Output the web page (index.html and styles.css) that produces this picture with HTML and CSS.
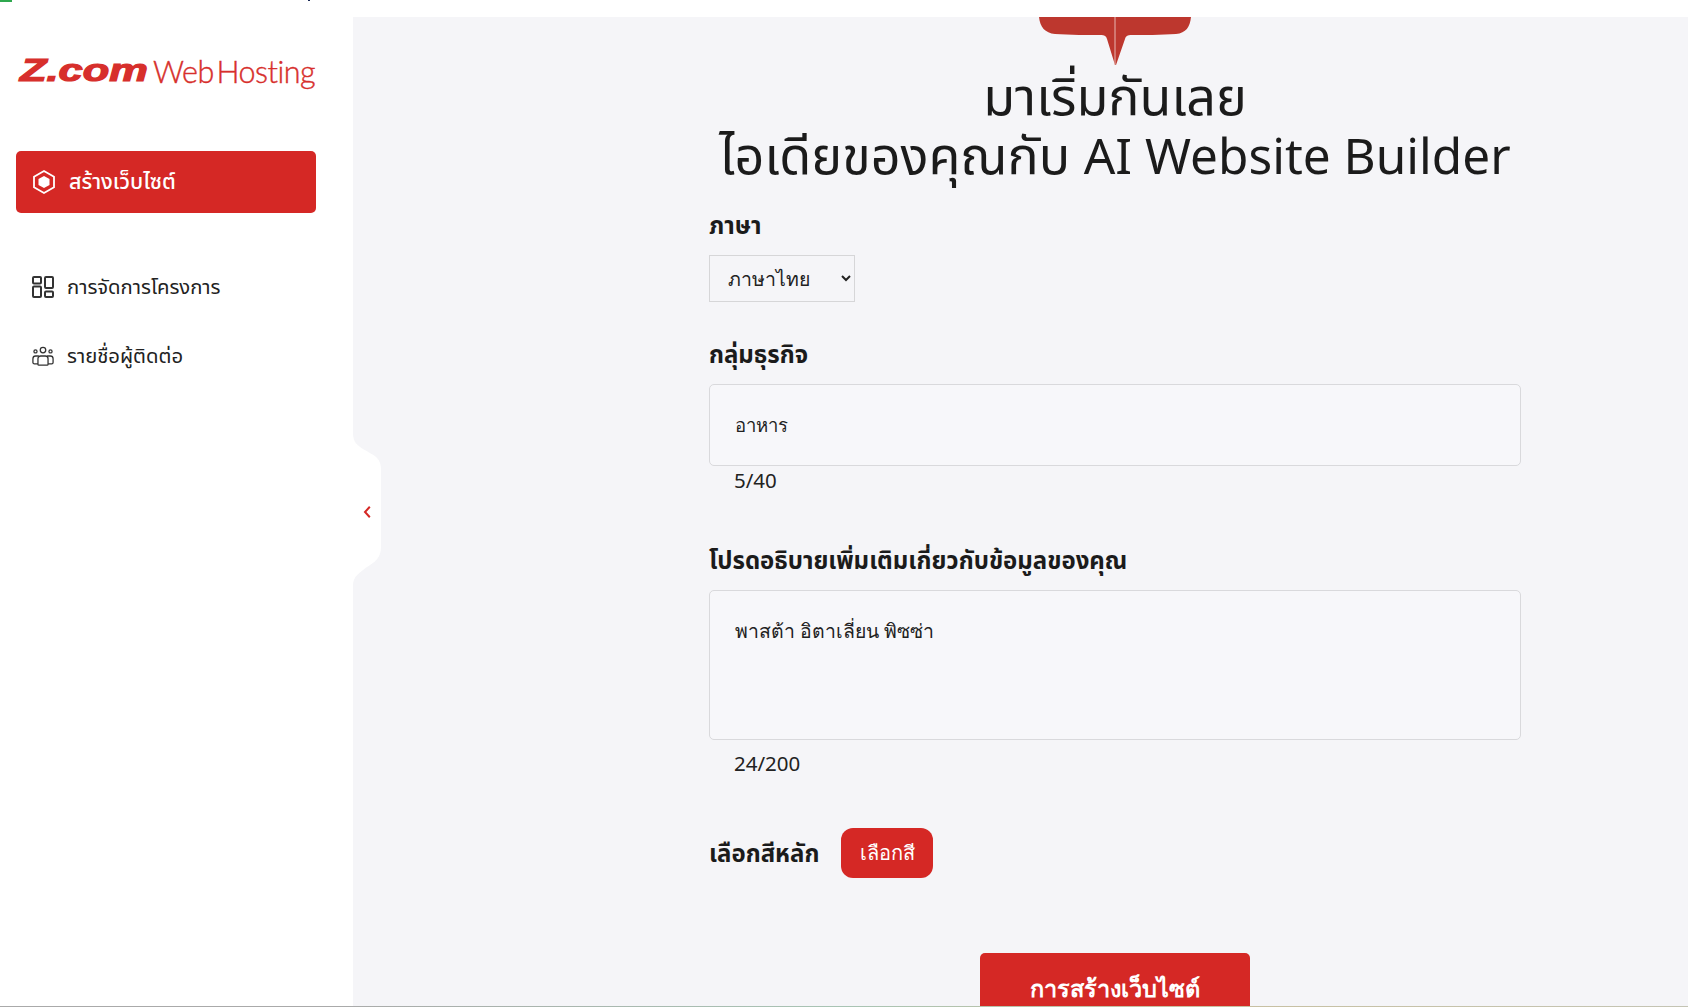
FILE: index.html
```html
<!DOCTYPE html>
<html lang="th">
<head>
<meta charset="utf-8">
<title>Z.com Web Hosting</title>
<link rel="stylesheet" href="styles.css">
</head>
<body>
<div class="topstrip"><span class="tick-green"></span><span class="tick-dark"></span></div>
<div class="shell">
  <aside class="sidebar">
    <div class="logo"><span class="logo-z">Z.com</span><span class="logo-web">Web Hosting</span></div>
    <a class="create">
      <svg class="hex" width="26" height="26" viewBox="0 0 26 26"><path d="M13 2l10 5.700v10.600L13 24 3 18.300V7.700z" fill="none" stroke="#fff" stroke-width="1.800"/><path d="M13 7l5.500 3.100v5.800L13 19l-5.500-3.100v-5.800z" fill="#fff"/></svg>
      <span>สร้างเว็บไซต์</span>
    </a>
    <nav class="nav">
      <a class="nav-item">
        <svg width="22" height="24" viewBox="0 0 22 24" fill="none" stroke="#333" stroke-width="2"><rect x="1" y="2" width="8" height="6.500" rx="1"/><rect x="1" y="11.500" width="8" height="10.500" rx="1"/><rect x="13" y="2" width="8" height="11" rx="1"/><rect x="13" y="16.500" width="8" height="5.500" rx="1"/></svg>
        <span>การจัดการโครงการ</span>
      </a>
      <a class="nav-item">
        <svg width="22" height="24" viewBox="0 0 24 24" fill="none" stroke="#333" stroke-width="1.400"><circle cx="12" cy="5.500" r="3"/><circle cx="3.800" cy="7" r="1.700"/><circle cx="20.200" cy="7" r="1.700"/><path d="M6.500 21v-6a3 3 0 0 1 3-3h5a3 3 0 0 1 3 3v6a1 1 0 0 1-1 1h-9a1 1 0 0 1-1-1z"/><path d="M6.500 20.500H2.500a1.500 1.500 0 0 1-1.500-1.500v-4a3 3 0 0 1 3-3h3.500"/><path d="M17.500 20.500h4a1.500 1.500 0 0 0 1.500-1.500v-4a3 3 0 0 0-3-3h-3.500"/></svg>
        <span>รายชื่อผู้ติดต่อ</span>
      </a>
    </nav>
    <div class="collapse">
      <svg class="collapse-shape" width="28" height="152" viewBox="0 0 28 152"><path d="M0 0c0 9 4 12 10 16 10 6 18 8 18 20v78c0 11-6 15-14 20-8 6-14 10-14 18z" fill="#fff"/></svg>
      <svg class="chev" width="8" height="14" viewBox="0 0 8 14"><path d="M6.800 1.800L2 7l4.800 5.200" fill="none" stroke="#d52825" stroke-width="2"/></svg>
    </div>
  </aside>
  <main class="main">
    <div class="column">
      <div class="pin"><svg width="152" height="48" viewBox="0 0 152 48"><path d="M0 0h152c-1 10-5 16-15 17-14 1-34 1-44 1-5 0-6 1-7 4l-9 26h-1l-8-26c-1-3-2-4-7-4-10 0-31 0-45-1C6 16 1 10 0 0z" fill="#bd372e"/><path d="M76 0v48" stroke="#e7b7b1" stroke-width="1"/></svg></div>
      <h1 class="title">มาเริ่มกันเลย<br>ไอเดียของคุณกับ <span class="title-latin">AI Website Builder</span></h1>
      <form class="form">
        <label class="label">ภาษา</label>
        <select class="select"><option>ภาษาไทย</option></select>
        <label class="label label-biz">กลุ่มธุรกิจ</label>
        <input class="field field-short" value="อาหาร">
        <div class="count">5/40</div>
        <label class="label label-desc">โปรดอธิบายเพิ่มเติมเกี่ยวกับข้อมูลของคุณ</label>
        <textarea class="field field-tall">พาสต้า อิตาเลี่ยน พิซซ่า</textarea>
        <div class="count count-tall">24/200</div>
        <div class="color-row">
          <label class="label">เลือกสีหลัก</label>
          <button type="button" class="pick">เลือกสี</button>
        </div>
        <div class="submit-row"><button type="button" class="submit">การสร้างเว็บไซต์</button></div>
      </form>
    </div>
  </main>
</div>
<div class="bottomline"></div>
</body>
</html>
```
FILE: styles.css
```css
* { box-sizing: border-box; }
html, body { margin: 0; height: 100%; overflow: hidden; }
body {
  background: #fff;
  color: #1b1b1b;
  font-family: "Noto Sans", "Noto Sans Thai", "DejaVu Sans", sans-serif;
  display: flex;
  flex-direction: column;
}
.topstrip { height: 17px; flex: none; position: relative; background: #fff; }
.tick-green { position: absolute; left: 0; top: 0; width: 12px; height: 2px; background: #2fa84f; }
.tick-dark { position: absolute; left: 308px; top: 0; width: 2px; height: 1px; background: #1a2a55; }
.shell { flex: 1; display: flex; min-height: 0; }
.sidebar { width: 353px; flex: none; background: #fff; padding: 40px 37px 0 16px; position: relative; z-index: 2; }
.logo { height: 28px; display: flex; align-items: center; color: #d72f2c; white-space: nowrap; }
.logo-z { font: italic 900 31px/28px "Liberation Sans", sans-serif; -webkit-text-stroke: 1.200px #d72f2c; width: 133px; margin-left: 4px; flex: none; display: inline-block; transform: scaleX(1.400); transform-origin: left center; }
.logo-web { font: 300 30.500px/28px "Lato", sans-serif; letter-spacing: -.5px; word-spacing: -5px; -webkit-text-stroke: .4px #d72f2c; }
.create { margin-top: 66px; height: 62px; background: #d52825; border-radius: 5px; color: #fff; display: flex; align-items: center; padding-left: 15px; gap: 12px; font-size: 21.500px; font-weight: 500; }
.nav { margin-top: 62px; display: flex; flex-direction: column; gap: 45px; padding-left: 16px; }
.nav-item { display: flex; align-items: center; gap: 13px; height: 24px; font-size: 20.300px; color: #222; }
.collapse { position: absolute; left: 353px; top: 416px; width: 28px; height: 152px; }
.collapse-shape { display: block; }
.chev { position: absolute; left: 10px; top: 72px; }
.main { flex: 1; background: #f5f5f8; min-width: 0; padding-left: 356px; overflow: hidden; }
.column { width: 812px; }
.pin { height: 48px; display: flex; justify-content: center; }
.title { margin: 0; text-align: center; font-size: 52px; font-weight: 400; line-height: 59px; color: #1b1b1b; white-space: nowrap; }
.title-latin { font-size: 49.500px; }
.form { margin-top: 25px; display: flex; flex-direction: column; align-items: flex-start; }
.label { font-size: 24px; font-weight: 700; line-height: 30px; color: #1b1b1b; }
.select { margin-top: 15px; width: 146px; height: 47px; border: 1px solid #d6d6d8; background: #f5f5f8; padding: 0 0 0 14px; font: 400 19.500px "Noto Sans", sans-serif; color: #222; }
.label-biz { margin-top: 37px; }
.field { display: block; width: 100%; border: 1px solid #d9d9dc; border-radius: 5px; background: #f7f7fa; padding: 0 25px; color: #222; outline: 0; resize: none; }
.field-short { margin-top: 15px; height: 82px; font: 400 18.500px "Noto Sans", sans-serif; }
.count { margin-left: 25px; margin-top: 1px; font-size: 20.500px; line-height: 26px; color: #222; }
.label-desc { margin-top: 52px; }
.field-tall { margin-top: 15px; height: 150px; padding-top: 25px; font: 400 19.400px/30px "Noto Sans", sans-serif; }
.count-tall { margin-top: 10px; }
.color-row { margin-top: 52px; display: flex; align-items: center; gap: 22px; }
.pick { width: 92px; height: 50px; border: 0; border-radius: 12px; background: #d52825; color: #fff; font: 500 20px "Noto Sans", sans-serif; padding: 0; }
.submit-row { margin-top: 75px; width: 100%; display: flex; justify-content: center; }
.submit { width: 270px; height: 70px; flex: none; border: 0; border-radius: 5px 5px 0 0; background: #d52825; color: #fff; font: 700 23.500px "Noto Sans", sans-serif; padding: 0; }
.bottomline { height: 1px; flex: none; background: linear-gradient(90deg, #aaa 0, #aaa 20%, #a8c4b4 50%, #c8c0a0 70%, #c4c4b4 100%); position: relative; z-index: 3; }
```
